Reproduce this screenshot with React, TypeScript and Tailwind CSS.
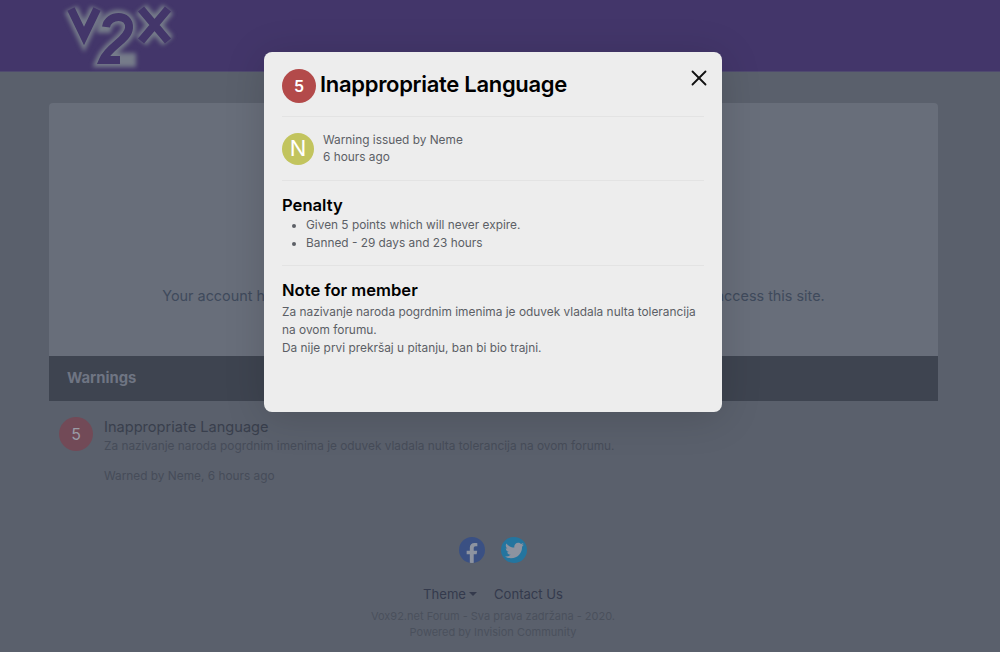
import React from 'react';
import { X } from 'lucide-react';
import { FaFacebookF, FaTwitter } from 'react-icons/fa';

const Logo = () => (
  <svg width="120" height="72" viewBox="0 0 120 72" className="absolute left-[60px] top-0">
    <g fill="none" strokeLinejoin="miter" strokeLinecap="butt">
      <g stroke="#767c8a" strokeWidth="14" className="blur-[2px]">
        <path d="M11 9 L24 36 L37 9" />
        <path d="M81 9 L108 41 M108 9 L81 41" />
        <path d="M44 33 C44 13 70 12 69 28 C68 40 49 46 43 60 L76 60" />
      </g>
      <g stroke="#43366a" strokeWidth="8">
        <path d="M11 9 L24 36 L37 9" />
        <path d="M81 9 L108 41 M108 9 L81 41" />
        <path d="M46 27 C48 14 70 13 69 28 C68 40 49 46 43 60 L60 60" />
      </g>
    </g>
  </svg>
);

const App = () => {
  return (
    <div className="relative h-[652px] w-[1000px] overflow-hidden bg-[#5a606c] font-['Inter',sans-serif]">
      {/* Header */}
      <div className="relative h-[72px] border-b border-[#4f4a6f] bg-[#43366a]">
        <Logo />
      </div>

      {/* Main */}
      <div className="ml-[49px] mt-[31px] w-[889px]">
        <div className="flex h-[253px] items-end justify-center rounded-t-[4px] bg-[#686e7a] pb-[50px]">
          <p className="whitespace-nowrap text-[14.4px] leading-[20px] text-[#3f4a5c]">
            Your account has been suspended for 29 days and you are temporarily unable to access this site.
          </p>
        </div>
        <div className="flex h-[45px] items-center bg-[#3e4450] px-[18px] text-[14.8px] font-bold text-[#6f7583]">
          Warnings
        </div>
        <div className="flex gap-[11px] px-[10px] pt-[16px]">
          <div className="flex h-[34px] w-[34px] shrink-0 items-center justify-center rounded-full bg-[#724a57] text-[16px] text-[#9a9ca6]">
            5
          </div>
          <div>
            <div className="text-[14.6px] leading-[20px] text-[#393f4d]">Inappropriate Language</div>
            <div className="text-[11.85px] leading-[18px] text-[#464c59]">
              Za nazivanje naroda pogrdnim imenima je oduvek vladala nulta tolerancija na ovom forumu.
            </div>
            <div className="mt-[12px] text-[11.85px] leading-[18px] text-[#464c59]">Warned by Neme, 6 hours ago</div>
          </div>
        </div>
      </div>

      {/* Footer */}
      <div className="mt-[52px] flex w-[986px] flex-col items-center">
        <div className="flex gap-[16px]">
          <div className="flex h-[26px] w-[26px] items-end justify-center overflow-hidden rounded-full bg-[#3a5083] text-[20px] text-[#8d93a0]">
            <FaFacebookF />
          </div>
          <div className="flex h-[26px] w-[26px] items-center justify-center rounded-full bg-[#24759f] text-[19px] text-[#8d93a0]">
            <FaTwitter />
          </div>
        </div>
        <div className="mt-[21px] flex items-center gap-[17px] text-[13.1px] leading-[20px] text-[#343a4c]">
          <span className="flex items-center gap-[3px]">
            Theme
            <span className="h-0 w-0 border-x-[4px] border-t-[4px] border-x-transparent border-t-[#343a4c]" />
          </span>
          <span>Contact Us</span>
        </div>
        <div className="mt-[4px] text-center text-[11px] leading-[16px] text-[#4a505c]">
          <div>Vox92.net Forum - Sva prava zadržana - 2020.</div>
          <div>Powered by Invision Community</div>
        </div>
      </div>

      {/* Modal */}
      <div className="absolute left-[264px] top-[52px] h-[360px] w-[458px] rounded-[8px] bg-[#ededed] px-[18px] shadow-[0_5px_40px_rgba(0,0,0,0.15)]">
        <div className="flex h-[65px] items-center gap-[4px] border-b border-[#e3e3e3] pt-[4px]">
          <div className="flex h-[34px] w-[34px] items-center justify-center rounded-full bg-[#b34a4a] text-[16px] font-semibold text-white">
            5
          </div>
          <h2 className="mb-[4px] text-[22px] font-semibold leading-[30px] tracking-[-0.3px] text-black">Inappropriate Language</h2>
        </div>
        <X className="absolute right-[10.5px] top-[13px] h-[26px] w-[26px] text-[#111]" strokeWidth={1.7} />

        <div className="flex h-[64px] items-center gap-[9px] border-b border-[#e3e3e3]">
          <div className="flex h-[32px] w-[32px] items-center justify-center rounded-full bg-[#c2c45e] text-[22px] text-white">
            N
          </div>
          <div className="text-[11.85px] leading-[17px] text-[#5c5f66]">
            <div>Warning issued by Neme</div>
            <div>6 hours ago</div>
          </div>
        </div>

        <div className="h-[85px] border-b border-[#e3e3e3] pt-[14px]">
          <h3 className="text-[16.6px] font-semibold leading-[20px] text-black">Penalty</h3>
          <ul className="mt-[2px] list-disc pl-[24px] text-[11.85px] leading-[17.5px] text-[#5c5f66]">
            <li>Given 5 points which will never expire.</li>
            <li>Banned - 29 days and 23 hours</li>
          </ul>
        </div>

        <div className="pt-[14px]">
          <h3 className="text-[16.6px] font-semibold leading-[20px] text-black">Note for member</h3>
          <p className="mt-[3px] text-[11.88px] leading-[18px] text-[#5c5f66]">
            Za nazivanje naroda pogrdnim imenima je oduvek vladala nulta tolerancija na ovom forumu.
            <br />
            Da nije prvi prekršaj u pitanju, ban bi bio trajni.
          </p>
        </div>
      </div>
    </div>
  );
};

export default App;
